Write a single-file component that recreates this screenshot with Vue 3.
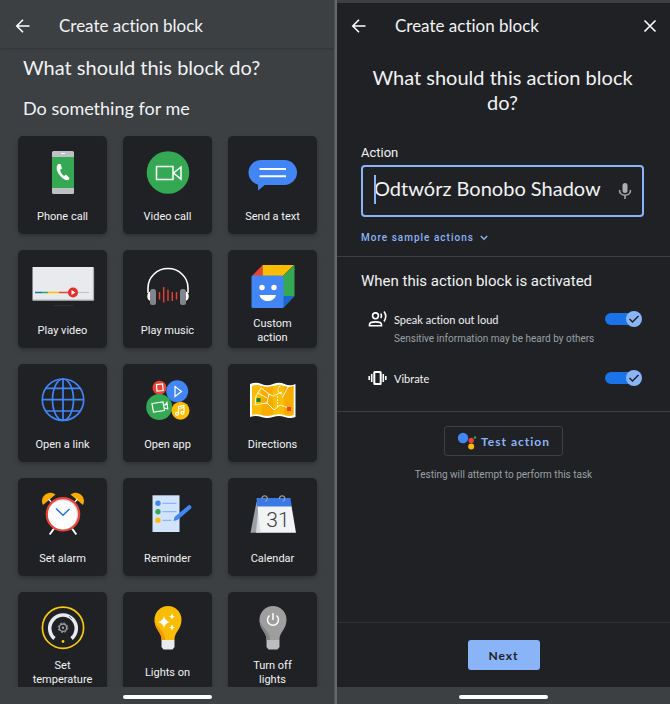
<script setup>
import { ref } from 'vue';

const blocks = [
    { id: 'phone', label: 'Phone call' },
    { id: 'video', label: 'Video call' },
    { id: 'text', label: 'Send a text' },
    { id: 'tv', label: 'Play video' },
    { id: 'music', label: 'Play music' },
    { id: 'custom', label: 'Custom action' },
    { id: 'link', label: 'Open a link' },
    { id: 'app', label: 'Open app' },
    { id: 'map', label: 'Directions' },
    { id: 'alarm', label: 'Set alarm' },
    { id: 'reminder', label: 'Reminder' },
    { id: 'calendar', label: 'Calendar' },
    { id: 'temperature', label: 'Set temperature' },
    { id: 'lightsOn', label: 'Lights on' },
    { id: 'lightsOff', label: 'Turn off lights' },
];

const action = ref('Odtwórz Bonobo Shadow');
const speak = ref(true);
const vibrate = ref(true);
</script>

<template>
    <div class="screens">
        <section class="screen picker">
            <header class="toolbar">
                <button type="button" class="icon-button" aria-label="Back">
                    <svg width="16" height="16" viewBox="0 0 16 16"><path d="M14.5 8H2M8 1.8L1.8 8L8 14.2" /></svg>
                </button>
                <h1>Create action block</h1>
            </header>
            <div class="picker-body">
                <h2>What should this block do?</h2>
                <h3>Do something for me</h3>
                <div class="grid">
                    <button v-for="block in blocks" :key="block.id" type="button" class="tile">
                        <svg width="64" height="48" viewBox="0 0 64 48" aria-hidden="true">
                            <g v-if="block.id === 'phone'">
                                <rect x="21" y="3" width="22" height="43" rx="1.5" fill="#bdc1c6" />
                                <rect x="21" y="9" width="22" height="31" fill="#34a853" />
                                <path d="M30 5.5h4" stroke="#fff" />
                                <path d="M27.5 16c-3 2-2 7 1 11s7 6.5 9.5 4.500l.5-1.500-3.500-3.500-2 1.500c-2-1.500-3.500-4-4-6l2-1.500-1.500-4.500z" fill="#fff" />
                            </g>
                            <g v-else-if="block.id === 'video'">
                                <circle cx="32" cy="24.5" r="21.3" fill="#34a853" />
                                <path d="M20.5 18.5H37V31.5H20.5zM37.5 25L45 19V31.2z" fill="none" stroke="#fff" stroke-width="1.5" />
                            </g>
                            <g v-else-if="block.id === 'text'">
                                <rect x="7.5" y="12" width="48.5" height="25" rx="12.5" fill="#4285f4" />
                                <path d="M17 34V42.5L25 36z" fill="#4285f4" />
                                <path d="M18.5 21H45M18.5 28.2H45" stroke="#fff" stroke-width="2" />
                            </g>
                            <g v-else-if="block.id === 'tv'">
                                <rect x="1.5" y="5" width="61" height="33.5" fill="#e8eaed" />
                                <path d="M2 38H62.5V5.5" fill="none" stroke="#aeb1b5" stroke-width="1.2" />
                                <path d="M4 30.5H11" stroke="#1a73b8" stroke-width="1.5" />
                                <path d="M11 30.5H17" stroke="#34a853" stroke-width="1.5" />
                                <path d="M17 30.5H28" stroke="#fbbc04" stroke-width="1.5" />
                                <path d="M28 30.5H42" stroke="#ea4335" stroke-width="1.5" />
                                <path d="M42 30.5H58" stroke="#bdc1c6" />
                                <circle cx="42" cy="30.5" r="5" fill="#e52d27" />
                                <path d="M40.5 28V33L44.5 30.5z" fill="#fff" />
                                <path d="M23 43.5H42" stroke="#303134" />
                            </g>
                            <g v-else-if="block.id === 'music'">
                                <path d="M12 31V26A20 19.5 0 0 1 52 26V31" fill="none" stroke="#fff" stroke-width="1.6" />
                                <path d="M15 29.5c-5 0-5 9.5 0 9.5zM49 29.5c5 0 5 9.5 0 9.5z" fill="#fff" />
                                <rect x="14" y="27" width="6" height="16" rx="2.5" fill="#80868b" />
                                <rect x="44" y="27" width="6" height="16" rx="2.5" fill="#80868b" />
                                <path d="M23.5 30V37.5M27.7 25V40.5M32 27.5V39M36.3 30V39M40.5 30V37.5" stroke="#ea4335" stroke-width="1.4" />
                            </g>
                            <g v-else-if="block.id === 'custom'">
                                <path d="M11 14L21.5 3V14z" fill="#ea4335" />
                                <path d="M21.5 3H53L42 14H21.5z" fill="#fbbc04" />
                                <path d="M42 14L53.5 3V34L42 46z" fill="#34a853" />
                                <path d="M42 46L53.5 34H42z" fill="#1967d2" />
                                <rect x="10.5" y="13.5" width="32" height="32.5" rx="1.5" fill="#4285f4" />
                                <circle cx="21" cy="25.5" r="2.7" fill="#fff" />
                                <circle cx="33" cy="25.5" r="2.7" fill="#fff" />
                                <path d="M18.5 33H35C33 41 20.5 41 18.5 33z" fill="#fff" />
                            </g>
                            <g v-else-if="block.id === 'link'" fill="none" stroke="#4285f4" stroke-width="1.7">
                                <circle cx="32" cy="23.7" r="20.7" />
                                <ellipse cx="32" cy="23.7" rx="10.5" ry="20.7" />
                                <path d="M32 3V44.5M11.3 23.7H52.7M15 12.3H49M15 35H49" />
                            </g>
                            <g v-else-if="block.id === 'app'">
                                <circle cx="23.5" cy="11.7" r="7" fill="#ea4335" />
                                <circle cx="41.2" cy="15.3" r="11" fill="#4285f4" />
                                <circle cx="23.2" cy="31" r="13" fill="#34a853" />
                                <circle cx="44.5" cy="34.7" r="9" fill="#fbbc04" />
                                <g fill="none" stroke="#fff" stroke-width="1.2">
                                    <path d="M20.5 8.7l6-.7.7 6.5-6.2.6zM39 10.5V20.5L45.5 15.5z" />
                                    <path d="M16 27.5l11-1.5 1.5 8.5-11 1.5zM28.500 29.5l2.5-3 .7 6.5-3-1" />
                                    <path d="M42.5 37.5V30.5L48 29.5V36.5M42.5 32.5L48 31.5" />
                                    <circle cx="41" cy="37.8" r="1.5" />
                                    <circle cx="46.5" cy="36.8" r="1.5" />
                                </g>
                            </g>
                            <g v-else-if="block.id === 'map'">
                                <path d="M9 8Q15 5.5 20.5 8T32 8T43.5 8T54.5 8V41Q49 43 43.5 41T32 41T20.5 41T9 41z" fill="#fff" />
                                <path d="M11 10Q16 8 20.5 10T32 10T43 10T52.5 10V39Q48 40.5 43 39T32 39T20.5 39T11 39z" fill="#fbbc04" />
                                <path d="M20.5 10Q26 12 32 10V39Q26 40.5 20.5 39zM43 10Q48 12 52.5 10V39Q48 40.5 43 39z" fill="#f9ab00" />
                                <path d="M14 29L15 20L20 12L28 18L26 27L14 29M17 17L26 22M28 18L32 20L41 16M26 27L33 34L39 29L48 32M41 22L48 9.5M39 10C35 13 37 17 41 18" fill="none" stroke="#fff" stroke-width=".9" />
                                <path d="M36.5 20V31" stroke="#fff" stroke-dasharray="2 1" />
                                <rect x="15.5" y="22" width="4" height="4" fill="#188038" />
                                <rect x="46" y="31" width="4" height="4" fill="#ea4335" />
                            </g>
                            <g v-else-if="block.id === 'alarm'">
                                <path d="M23 38.5L18.7 44.5M41 38.5L45.3 44.5" stroke="#fff" stroke-width="2" />
                                <path d="M12 15C8 7 17-1 24.5 4.5zM52 15C56 7 47-1 39.5 4.5z" fill="#f9ab00" />
                                <path d="M17.5 9L22 14M46.5 9L42 14" stroke="#e8eaed" stroke-width="1.5" />
                                <circle cx="32" cy="24.3" r="16.2" fill="#dadce0" stroke="#ea4335" stroke-width="2.2" />
                                <circle cx="31.5" cy="24.8" r="14.4" fill="#fff" />
                                <path d="M25 18.5L32 25.3L38.5 19" fill="none" stroke="#1a73e8" stroke-width="1.5" />
                            </g>
                            <g v-else-if="block.id === 'reminder'">
                                <rect x="16.5" y="5.3" width="27" height="36.7" fill="#d2e3fc" />
                                <circle cx="22" cy="13.3" r="2.7" fill="#4285f4" />
                                <circle cx="22" cy="21.7" r="2.7" fill="#34a853" />
                                <circle cx="22" cy="30.3" r="2.7" fill="#fbbc04" />
                                <path d="M26.5 13.3H40.5M26.5 21.7H40.5M26.5 30.3H35.5" stroke="#8ab4f8" stroke-width="1.2" />
                                <path d="M37.5 31L38.5 27L52.5 15.3Q54.5 14.5 55.5 17L55 18.5L41.5 30z" fill="#4285f4" />
                            </g>
                            <g v-else-if="block.id === 'calendar'">
                                <path d="M15.5 12L9.5 42.7H19L18 12z" fill="#9aa0a6" />
                                <path d="M18 12L15 42.7H20z" fill="#dadce0" />
                                <path d="M16.5 16H50.5L55 42.7H19.5z" fill="#f1f3f4" />
                                <path d="M15.5 8H49.5L50.7 16.5H16z" fill="#3b78e7" />
                                <path d="M21 9a2.7 2.7 0 1 1 3 2.2M38.5 9a2.7 2.7 0 1 1 3 2.2" fill="none" stroke="#9aa0a6" stroke-width="1.2" />
                                <text x="37" y="37" class="calendar-day">31</text>
                            </g>
                            <g v-else-if="block.id === 'temperature'" fill="none">
                                <circle cx="32" cy="23.7" r="20.6" stroke="#fbcb0a" stroke-width="1.7" />
                                <path d="M23.5 34.5A13.3 13.3 0 1 1 40.5 34.5" stroke="#e8eaed" stroke-width="3.6" />
                                <path d="M38 12l3 3" stroke="#80868b" />
                                <circle cx="32" cy="23.7" r="3.7" stroke="#9aa0a6" stroke-width="1.3" />
                                <circle cx="32" cy="23.7" r="4.8" stroke="#9aa0a6" stroke-dasharray="1.9 1.87" />
                                <circle cx="32" cy="23.7" r="1.2" fill="#9aa0a6" />
                                <circle cx="32" cy="37.5" r="1.4" fill="#fbcb0a" />
                            </g>
                            <g v-else-if="block.id === 'lightsOn'">
                                <path d="M25.5 36C26 28 18.5 26 18.5 15.5A13.5 13.5 0 0 1 45.5 15.5C45.5 26 38 28 38.5 36z" fill="#fbbc04" />
                                <path d="M25.5 36C26 28 18.5 26 18.5 15.5C20 24 29 26 29 36z" fill="#f29900" />
                                <path d="M25.5 36H38.5V43L36.5 45.5H27.5L25.5 43z" fill="#e8eaed" />
                                <path d="M28 12Q29 17 34 18Q29 19 28 24Q27 19 22 18Q27 17 28 12zM36 9.5Q36.5 12 39 12.5Q36.5 13 36 15.5Q35.5 13 33 12.5Q35.5 12 36 9.5zM36 20.5Q36.5 23 39 23.5Q36.5 24 36 26.5Q35.5 24 33 23.5Q35.5 23 36 20.5z" fill="#fff" />
                            </g>
                            <g v-else>
                                <path d="M25.5 36C26 28 18.5 26 18.5 15.5A13.5 13.5 0 0 1 45.5 15.5C45.5 26 38 28 38.5 36z" fill="#9e9e9e" />
                                <path d="M25.5 36C26 28 18.5 26 18.5 15.5C20 24 29 26 29 36z" fill="#858585" />
                                <path d="M25.5 36H38.5V43L36.5 45.5H27.5L25.5 43z" fill="#bdbdbd" />
                                <path d="M28.5 11.5A5.5 5.5 0 1 0 35.5 11.5M32 9V16" fill="none" stroke="#fff" stroke-width="1.5" />
                            </g>
                        </svg>
                        <span class="tile-label">{{ block.label }}</span>
                    </button>
                </div>
            </div>
            <div class="nav-bar"><span class="pill"></span></div>
        </section>

        <section class="screen editor">
            <header class="toolbar">
                <button type="button" class="icon-button" aria-label="Back">
                    <svg width="16" height="16" viewBox="0 0 16 16"><path d="M14.5 8H2M8 1.8L1.8 8L8 14.2" /></svg>
                </button>
                <h1>Create action block</h1>
                <button type="button" class="icon-button close" aria-label="Close">
                    <svg width="16" height="16" viewBox="0 0 16 16"><path d="M2.5 2.5L13.5 13.5M13.5 2.5L2.5 13.5" /></svg>
                </button>
            </header>

            <div class="action-form">
                <h2>What should this action block do?</h2>
                <label for="action">Action</label>
                <div class="field">
                    <span class="caret"></span>
                    <input id="action" v-model="action" type="text" />
                    <button type="button" class="mic" aria-label="Voice input">
                        <svg width="14" height="18" viewBox="0 0 14 18">
                            <rect x="4.5" y="1" width="5" height="10" rx="2.5" fill="#aaadb1" />
                            <path d="M1.5 8C1.5 15 12.5 15 12.5 8M7 13V17" fill="none" stroke="#aaadb1" stroke-width="1.5" />
                        </svg>
                    </button>
                </div>
                <button type="button" class="more">
                    More sample actions
                    <svg width="8" height="6" viewBox="0 0 8 6"><path d="M.8 1L4 4.3L7.2 1" fill="none" stroke="#8ab4f8" stroke-width="1.4" /></svg>
                </button>
            </div>

            <div class="options">
                <h3>When this action block is activated</h3>
                <div class="option">
                    <svg width="20" height="18" viewBox="0 0 20 18" fill="none" stroke="#fff" stroke-width="1.6">
                        <circle cx="7.5" cy="5.8" r="2.9" />
                        <path d="M1.5 15.7V14.5C1.5 11 13.5 11 13.5 14.5V15.7z" />
                        <path d="M12.8 3.5Q14 5.8 12.8 8M16 1.5Q19.5 6 16 11.5" />
                    </svg>
                    <label for="speak">Speak action out loud</label>
                    <input id="speak" v-model="speak" type="checkbox" class="switch" />
                </div>
                <p>Sensitive information may be heard by others</p>
                <div class="option">
                    <svg width="20" height="18" viewBox="0 0 20 18" fill="none" stroke="#fff" stroke-width="1.6">
                        <rect x="6.3" y="3" width="6.4" height="12" rx=".5" stroke-width="2" />
                        <path d="M3.7 5V13M1.2 7V11M15.3 5V13M17.8 7V11" />
                    </svg>
                    <label for="vibrate">Vibrate</label>
                    <input id="vibrate" v-model="vibrate" type="checkbox" class="switch" />
                </div>
            </div>

            <div class="test">
                <button type="button">
                    <svg width="20" height="18" viewBox="0 0 20 18">
                        <circle cx="6" cy="6" r="5.2" fill="#4285f4" />
                        <circle cx="14.2" cy="8.5" r="2.7" fill="#ea4335" />
                        <circle cx="14.2" cy="14.5" r="3" fill="#fbbc04" />
                        <circle cx="18" cy="5.5" r="1.2" fill="#34a853" />
                    </svg>
                    Test action
                </button>
                <p>Testing will attempt to perform this task</p>
            </div>

            <footer>
                <button type="button">Next</button>
            </footer>
            <div class="nav-bar"><span class="pill"></span></div>
        </section>
    </div>
</template>

<style>
body {
    margin: 0;
    background: #3c4043;
}
</style>

<style scoped>
.screens {
    display: grid;
    grid-template-columns: 1fr 1fr;
    height: 100vh;
    color: #f1f3f4;
    font-family: Roboto, sans-serif;
    font-variant-ligatures: none;
}

.screens * {
    box-sizing: border-box;
}

.screen {
    display: flex;
    flex-direction: column;
    min-width: 0;
    min-height: 0;
}

h1, h2, h3, p {
    margin: 0;
    font-weight: 400;
}

button {
    border: none;
    padding: 0;
    background: none;
    color: inherit;
    font-family: inherit;
    cursor: pointer;
}

.picker {
    background: #3c4043;
    border-right: 1px solid #505356;
}

.editor {
    background: #202124;
    border-left: 2px solid #66696b;
}

.toolbar {
    flex: none;
    display: flex;
    align-items: center;
    height: 48px;
    padding: 3px 12px 0 15px;
}

.picker .toolbar {
    box-shadow: 0 1px 2px rgba(0, 0, 0, 0.2);
}

.editor .toolbar {
    padding-left: 14px;
    border-top: 3px solid #3c4043;
    padding-top: 0;
}

.toolbar h1 {
    margin-left: 28px;
    font-family: Lato, sans-serif;
    font-size: 17px;
    line-height: 24px;
}

.icon-button {
    display: flex;
}

.icon-button path {
    fill: none;
    stroke: #fff;
    stroke-width: 1.6;
}

.close {
    margin-left: auto;
}

.picker-body {
    flex: 1;
    min-height: 0;
    overflow: hidden;
    padding: 4px 17px 0 18px;
}

h2 {
    font-family: Lato, sans-serif;
    font-size: 20px;
    line-height: 25px;
}

.picker h2 {
    padding: 3px 5px 0;
}

.picker h3 {
    padding: 16px 5px;
    font-family: Lato, sans-serif;
    font-size: 18px;
    line-height: 24px;
}

.grid {
    display: grid;
    grid-template-columns: repeat(3, 1fr);
    gap: 16px;
}

.tile {
    display: flex;
    flex-direction: column;
    align-items: center;
    height: 98px;
    padding-top: 12px;
    border-radius: 5px;
    background: #202124;
    box-shadow: 0 2px 4px rgba(0, 0, 0, 0.25);
}

.tile svg {
    flex: none;
}

.tile-label {
    flex: 1;
    display: flex;
    align-items: center;
    justify-content: center;
    width: 68px;
    padding-top: 4px;
    font-size: 11px;
    line-height: 14px;
}

.calendar-day {
    fill: #3c4043;
    font-family: Roboto, sans-serif;
    font-size: 21px;
    font-weight: 300;
    text-anchor: middle;
}

.nav-bar {
    flex: none;
    display: flex;
    justify-content: center;
    height: 17px;
    padding-top: 8px;
    background: #3c4043;
}

.pill {
    width: 89px;
    height: 4px;
    border-radius: 2px;
    background: #fff;
}

.action-form {
    padding: 17px 26px 10px 24px;
    border-bottom: 1px solid #3c4043;
}

.action-form h2 {
    margin-bottom: 29px;
    text-align: center;
}

.action-form label {
    display: block;
    font-size: 13px;
    line-height: 18px;
    margin-bottom: 3px;
}

.field {
    position: relative;
    display: flex;
    align-items: center;
    height: 52px;
    padding: 0 10px 0 11px;
    border: 2px solid #8ab4f8;
    border-radius: 4px;
}

.field input {
    flex: 1;
    min-width: 0;
    height: 48px;
    margin-right: 14px;
    padding: 0 0 6px;
    border: none;
    outline: none;
    background: none;
    color: #f1f3f4;
    font-family: Lato, sans-serif;
    font-size: 20px;
}

.caret {
    position: absolute;
    left: 11px;
    top: 8px;
    width: 2px;
    height: 29px;
    background: #8ab4f8;
}

.mic {
    display: flex;
}

.more {
    display: flex;
    align-items: center;
    gap: 6px;
    margin-top: 13px;
    color: #8ab4f8;
    font-size: 10px;
    font-weight: 500;
    line-height: 16px;
    letter-spacing: 1px;
}

.options {
    padding: 14px 28px 21px 24px;
    border-bottom: 1px solid #3c4043;
}

.options h3 {
    margin-bottom: 16px;
    font-size: 15px;
    line-height: 20px;
}

.option {
    display: flex;
    align-items: center;
    gap: 6px;
    height: 24px;
    padding-left: 7px;
}

.option label {
    flex: 1;
    font-family: Lato, sans-serif;
    font-size: 11px;
}

.options p {
    margin-bottom: 19px;
    padding-left: 33px;
}

.options p, .test p {
    color: #9aa0a6;
    font-size: 10px;
    line-height: 16px;
}

.switch {
    position: relative;
    appearance: none;
    width: 37px;
    height: 16px;
    margin: 0;
    cursor: pointer;
}

.switch::before {
    content: '';
    position: absolute;
    left: 0;
    top: 2px;
    width: 32px;
    height: 12px;
    border-radius: 6px;
    background: #5f6368;
}

.switch::after {
    content: '';
    position: absolute;
    left: 0;
    top: 0;
    width: 16px;
    height: 16px;
    border-radius: 8px;
    background: #bdc1c6;
}

.switch:checked::before {
    background: #1a73e8;
}

.switch:checked::after {
    left: 21px;
    background: #8ab4f8 url("data:image/svg+xml,%3Csvg xmlns='http://www.w3.org/2000/svg' viewBox='0 0 16 16'%3E%3Cpath d='M3.5 8L6.5 11L12.5 5' fill='none' stroke='%23202124' stroke-width='1.5'/%3E%3C/svg%3E");
}

.test {
    flex: 1;
    display: flex;
    flex-direction: column;
    align-items: center;
    padding-top: 14px;
}

.test button {
    display: flex;
    align-items: center;
    gap: 4px;
    height: 30px;
    margin-bottom: 11px;
    padding: 0 12px;
    border: 1px solid #3c4043;
    border-radius: 3px;
    color: #8ab4f8;
    font-family: Lato, sans-serif;
    font-size: 12px;
    font-weight: 700;
    letter-spacing: 1px;
}

footer {
    display: flex;
    justify-content: center;
    padding: 17px 0;
    border-top: 1px solid #303134;
}

footer button {
    width: 72px;
    height: 30px;
    border-radius: 3px;
    background: #8ab4f8;
    color: #202124;
    font-family: Lato, sans-serif;
    font-size: 12px;
    font-weight: 700;
    letter-spacing: 1px;
}
</style>
